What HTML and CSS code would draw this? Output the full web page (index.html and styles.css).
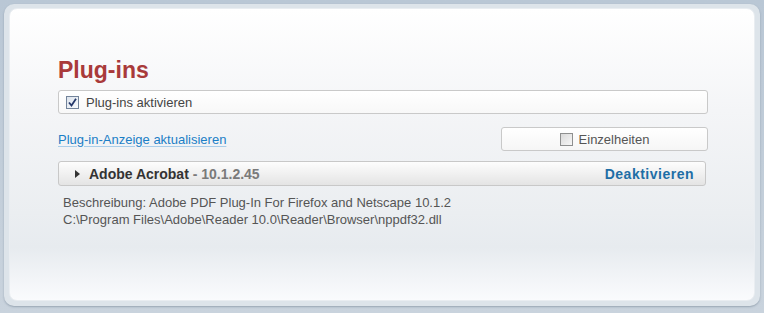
FILE: index.html
```html
<!DOCTYPE html>
<html lang="de">
<head>
  <meta charset="UTF-8">
  <title>Plug-ins</title>
  <link rel="stylesheet" href="styles.css">
</head>
<body>
  <div class="frame">
    <div class="panel">
      <h1>Plug-ins</h1>

      <!-- Plug-ins aktivieren -->
      <label class="option-row">
        <span class="check checked">
          <svg width="9" height="9" viewBox="0 0 9 9"><path d="M1 4.5 L3.5 7.5 L8 0.8" fill="none" stroke="#25386a" stroke-width="1.8"/></svg>
        </span>
        <span>Plug-ins aktivieren</span>
      </label>

      <!-- Aktualisieren / Einzelheiten -->
      <div class="tools-row">
        <a class="refresh" href="#">Plug-in-Anzeige aktualisieren</a>
        <label class="details-btn">
          <span class="check"></span>
          <span>Einzelheiten</span>
        </label>
      </div>

      <!-- Plugin -->
      <div class="plugin-head">
        <span class="arrow"></span>
        <span class="plugin-name">Adobe Acrobat</span>
        <span class="plugin-version">&nbsp;- 10.1.2.45</span>
        <a class="disable" href="#">Deaktivieren</a>
      </div>
      <div class="plugin-info">
        <div>Beschreibung: Adobe PDF Plug-In For Firefox and Netscape 10.1.2</div>
        <div>C:\Program Files\Adobe\Reader 10.0\Reader\Browser\nppdf32.dll</div>
      </div>
    </div>
  </div>
</body>
</html>
```

FILE: styles.css
```css
/* General */
body {
  margin: 0;
  padding: 4px;
  height: 313px;
  box-sizing: border-box;
  background: linear-gradient(#b9c7d5, #c9d3dd);
  font-family: "Liberation Sans", Arial, sans-serif;
  font-size: 13px;
  color: #444;
}

/* Outer frame */
.frame {
  height: 302px;
  box-sizing: border-box;
  padding: 4px 5px 5px 5px;
  background: #dde4ea;
  border-radius: 10px;
  box-shadow: 0 1px 2px rgba(60, 80, 100, 0.35);
}

.panel {
  height: 100%;
  box-sizing: border-box;
  padding: 48px 46px 0 48px;
  border-radius: 8px;
  border: 1px solid #e9edf1;
  background: linear-gradient(#ffffff 0%, #f4f5f7 35%, #ebeef1 70%, #e7ebef 82%, #fafbfd 100%);
}

h1 {
  margin: 0;
  font-size: 23px;
  line-height: 26px;
  color: #a93a3a;
}

/* Checkbox */
.check {
  width: 13px;
  height: 13px;
  box-sizing: border-box;
  border: 1px solid #8e8f8f;
  background: linear-gradient(135deg, #d9d9d9, #f7f7f7);
  display: inline-flex;
  align-items: center;
  justify-content: center;
  flex-shrink: 0;
}

.check.checked {
  border-color: #72839a;
  background: linear-gradient(135deg, #dce3ec, #f8fafc);
}

/* Option rows */
.option-row {
  margin-top: 7px;
  height: 24px;
  box-sizing: border-box;
  display: flex;
  align-items: center;
  gap: 7px;
  padding-left: 7px;
  border: 1px solid #c9c9c9;
  border-radius: 3px;
  background: linear-gradient(#ffffff, #f8f8f8);
}

.tools-row {
  margin-top: 13px;
  height: 24px;
  display: flex;
  justify-content: space-between;
  align-items: center;
}

.refresh {
  color: #1b7ec6;
  text-decoration: underline;
  text-decoration-color: #a9cde9;
  text-underline-offset: 2px;
}

.details-btn {
  width: 207px;
  height: 24px;
  box-sizing: border-box;
  display: flex;
  align-items: center;
  justify-content: center;
  gap: 6px;
  border: 1px solid #c9c9c9;
  border-radius: 3px;
  background: linear-gradient(#ffffff, #f6f6f6);
  color: #555;
}

/* Plugin header */
.plugin-head {
  margin: 10px 2px 0 0;
  height: 25px;
  box-sizing: border-box;
  display: flex;
  align-items: center;
  padding: 0 11px 0 16px;
  border: 1px solid #c8c8c8;
  border-radius: 3px;
  background: linear-gradient(#fdfdfd, #e4e4e4);
  font-size: 14px;
  font-weight: bold;
}

.arrow {
  width: 0;
  height: 0;
  border-top: 4px solid transparent;
  border-bottom: 4px solid transparent;
  border-left: 5px solid #333;
  margin-right: 9px;
}

.plugin-name {
  color: #333;
}

.plugin-version {
  color: #7a7a7a;
}

.disable {
  margin-left: auto;
  color: #1e6ea6;
  text-decoration: none;
  letter-spacing: 0.5px;
}

.plugin-info {
  margin-top: 8px;
  padding-left: 5px;
  line-height: 17px;
  color: #555;
}
```
